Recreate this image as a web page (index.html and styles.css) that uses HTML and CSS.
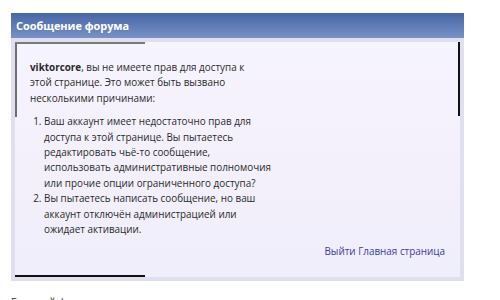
FILE: index.html
```html
<!DOCTYPE html>
<html lang="ru">
<head>
<meta charset="utf-8">
<link rel="stylesheet" href="styles.css">
</head>
<body>
<div class="page">
  <div class="panel">
    <div class="panel-head">Сообщение форума</div>
    <div class="panel-body">
      <div class="box">
        <p class="intro"><b>viktorcore</b>, вы не имеете прав для доступа к этой странице. Это может быть вызвано несколькими причинами:</p>
        <ol class="reasons">
          <li>Ваш аккаунт имеет недостаточно прав для доступа к этой странице. Вы пытаетесь редактировать чьё-то сообщение, использовать административные полномочия или прочие опции ограниченного доступа?</li>
          <li>Вы пытаетесь написать сообщение, но ваш аккаунт отключён администрацией или ожидает активации.</li>
        </ol>
        <div class="links"><a href="#">Выйти</a> <a href="#">Главная страница</a></div>
      </div>
    </div>
  </div>
  <div class="footer">Главный форум</div>
</div>
</body>
</html>
```
FILE: styles.css
```css
html, body {
  margin: 0;
  padding: 0;
  background: #ffffff;
}
body {
  font-family: "Open Sans", Roboto, sans-serif;
  font-size: 9.9px;
  color: #2a2a2a;
}
.page {
  padding: 13px 0 0 11px;
}
.panel {
  width: 453px;
  background: #dfdfee;
}
.panel-head {
  height: 25px;
  line-height: 25px;
  padding-left: 5px;
  color: #ffffff;
  font-weight: bold;
  font-size: 10.9px;
  background: linear-gradient(#4766a6, #7892c6);
}
.panel-body {
  padding: 4px 4px 4px 4px;
}
.box {
  padding: 18px 15px 17px 15px;
  background:
    linear-gradient(#7a7a7a, #7a7a7a) 0 0 / 130px 2px no-repeat,
    linear-gradient(#6e6e6e, #6e6e6e) 0 0 / 2px 75px no-repeat,
    linear-gradient(#111111, #111111) 100% 0 / 2px 74px no-repeat,
    linear-gradient(#111111, #111111) 0 100% / 130px 2px no-repeat,
    linear-gradient(#f6f4fe, #f4f0fb 50%, #efeefb);
  line-height: 15.4px;
}
.intro {
  margin: 0;
  width: 225px;
}
.reasons {
  margin: 8px 0 0 0;
  padding-left: 14px;
  width: 235px;
}
.links {
  margin-top: 7px;
  text-align: right;
}
.links a {
  color: #3b3ba6;
  text-decoration: none;
}
.footer {
  margin-top: 14px;
  font-size: 10.5px;
  color: #2a2a2a;
}
```
